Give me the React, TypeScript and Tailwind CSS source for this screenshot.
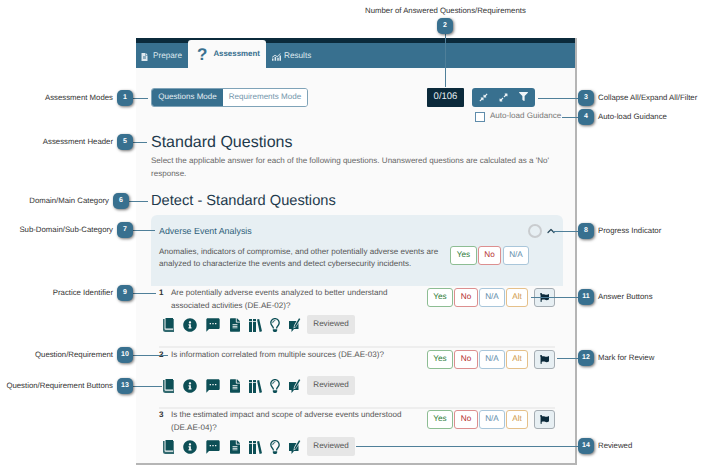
import { FaInfoCircle, FaFileAlt, FaRegLightbulb, FaFlag, FaFilter, FaCompressAlt, FaExpandAlt } from "react-icons/fa";
import { MdSms } from "react-icons/md";
import { ChevronUp } from "lucide-react";

function Bubble({ n, className }: { n: number; className: string }) {
  return (
    <div
      className={`absolute flex h-[16px] w-[16px] items-center justify-center rounded-[5px] bg-[#38708f] text-[7px] font-bold text-white shadow-[1px_1px_3px_rgba(0,0,0,0.55)] ${className}`}
    >
      {n}
    </div>
  );
}

function Label({ children, className }: { children: React.ReactNode; className: string }) {
  return <div className={`absolute whitespace-nowrap text-[7.8px] leading-[10px] text-[#333] ${className}`}>{children}</div>;
}

function Line({ className }: { className: string }) {
  return <div className={`absolute bg-[#4f7f99] ${className}`} />;
}

function Answer({ label, className }: { label: string; className: string }) {
  return (
    <div className={`flex h-[19px] items-center justify-center rounded-[3px] border bg-white text-[8.2px] ${className}`}>
      {label}
    </div>
  );
}

function BookIcon() {
  return (
    <svg viewBox="0 0 11 14" className="h-[14px] w-[11px]" fill="#0d4f56">
      <path d="M2.5 0H10v10.5H2.5z" />
      <path d="M0 1h1.6v9.8q0 1 1 1H10.2V1H11v13H2.5Q0 14 0 12z" opacity="0.85" />
    </svg>
  );
}

function ShelfIcon() {
  return (
    <svg viewBox="0 0 13 14" className="h-[14px] w-[13px]" fill="#0d4f56">
      <path d="M0 1h3v13H0zM4 1h3v13H4z" />
      <path d="M8 1.6l2.2-.6L13 13.2l-2.4.8z" />
      <path d="M0 3h3v.8H0zM4 3h3v.8H4z" fill="#fafafa" />
    </svg>
  );
}

function TaskIcon() {
  return (
    <svg viewBox="0 0 12 14" className="h-[14px] w-[12px]" fill="#0d4f56">
      <path d="M0 3h7.5L5 7.5l-.5 3 2.5-1.6L9.5 5V11H5l-2.5 3v-3H0z" />
      <path d="M5.6 7.8L10 .2l1.3.8-4.4 7.6-1.6 1z" />
    </svg>
  );
}

function IconRow() {
  return (
    <div className="flex items-center">
      <div className="flex w-[143px] items-center justify-between pl-[4px] pr-[1px] text-[#0d4f56]">
        <BookIcon />
        <FaInfoCircle className="h-[14px] w-[14px]" />
        <MdSms className="h-[16px] w-[16px]" />
        <FaFileAlt className="h-[14px] w-[10px]" />
        <ShelfIcon />
        <FaRegLightbulb className="h-[14px] w-[10px]" />
        <TaskIcon />
      </div>
      <div className="ml-[5px] flex h-[19px] w-[48px] items-center justify-center rounded-[2px] bg-[#e6e6e6] text-[8.05px] text-[#555]">
        Reviewed
      </div>
    </div>
  );
}

function Question({ n, lines }: { n: number; lines: string[] }) {
  return (
    <div className="flex items-start">
      <div className="flex-1">
        <div className="-mt-[1px] flex text-[8.05px] leading-[12.5px] text-[#555]">
          <span className="w-[12px] font-bold text-[#333]">{n}</span>
          <div>
            {lines.map((l) => (
              <div key={l}>{l}</div>
            ))}
          </div>
        </div>
      </div>
      <div className="flex items-center">
        <Answer label="Yes" className="w-[26px] border-[#8dbd93] text-[#2f7d3a]" />
        <Answer label="No" className="ml-[1px] w-[24px] border-[#dc8f8f] text-[#b52e2e]" />
        <Answer label="N/A" className="ml-[1px] w-[26px] border-[#a9c6da] text-[#5f8cab]" />
        <Answer label="Alt" className="ml-[1px] w-[22px] border-[#e5c08a] text-[#d09a4a]" />
        <div className="ml-[6px] flex h-[19px] w-[21px] items-center justify-center rounded-[3px] border border-[#a5adb3] bg-[#e7eff3] text-[#0b2a3b]">
          <FaFlag className="mb-[1px] h-[9px] w-[9px]" />
        </div>
      </div>
    </div>
  );
}

export default function App() {
  return (
    <div className="relative h-[469px] w-[706px] overflow-hidden bg-white font-['Liberation_Sans',Arial,sans-serif] [text-rendering:geometricPrecision]">
      <div className="absolute left-[136px] top-[38px] flex h-[427px] w-[441px] flex-col border-r-2 border-b-2 border-[#b5b5b5] bg-[#fafafa]">
        <div className="h-[5px] shrink-0 bg-[#0b2a3b]" />
        <div className="flex h-[25px] shrink-0 bg-[#38708f]">
          <div className="flex w-[52px] items-center pl-[5px] pt-[2px] text-[8.2px] text-[#dfe9ef]">
            <FaFileAlt className="mr-[5px] h-[8px] w-[7px]" />
            Prepare
          </div>
          <div className="-mt-[3px] flex h-[28px] w-[78px] items-center rounded-t-[3px] bg-[#fafafa] pl-[9px] text-[7.9px] font-bold text-[#38708f]">
            <span className="mr-[6px] text-[17px] leading-none">?</span>
            Assessment
          </div>
          <div className="flex items-center pl-[6px] pt-[2px] text-[8.2px] text-[#dfe9ef]">
            <svg viewBox="0 0 12 10" className="mr-[3px] h-[8px] w-[9px]" fill="currentColor">
              <path d="M0 7h2v3H0zM3.5 5h2v5h-2zM7 6h2v4H7zM10 3h2v7h-2zM0 5l4-3 3 2 4-4 .6.6L7 5.4 4 3.4 0.6 6z" />
            </svg>
            Results
          </div>
        </div>

        <div className="flex-1 px-[15px]">
          <div className="flex pt-[20px]">
            <div className="flex h-[19px] overflow-hidden rounded-[3px] border border-[#7fa3b8] text-[8.05px]">
              <div className="flex w-[71px] items-center justify-center bg-[#38708f] text-[#e5eef3]">Questions Mode</div>
              <div className="flex w-[84px] items-center justify-center bg-white text-[#7295ab]">Requirements Mode</div>
            </div>
            <div className="ml-[119px] flex h-[19px] w-[37px] items-center justify-center rounded-[1px] bg-[#0b2a3b] text-[9.5px] text-[#e5eef3]">
              0/106
            </div>
            <div className="ml-[8px] flex h-[19px] w-[63px] items-center justify-around rounded-[3px] bg-[#38708f] px-[2px] text-[#f0f5f8]">
              <FaCompressAlt className="h-[9px] w-[9px]" />
              <FaExpandAlt className="h-[9px] w-[9px]" />
              <FaFilter className="mb-[2px] h-[9px] w-[9px]" />
            </div>
          </div>
          <div className="mt-[2px] flex h-[15px] items-center whitespace-nowrap pl-[324px] text-[8.05px] text-[#777]">
            <div className="mr-[5px] h-[10px] w-[10px] shrink-0 border border-[#5f8cab] bg-white" />
            Auto-load Guidance
          </div>

          <h1 className="mt-[7px] text-[16px] leading-[24px] text-[#1f3a4d]">Standard Questions</h1>
          <p className="w-[405px] text-[8.05px] leading-[12.5px] text-[#666]">
            Select the applicable answer for each of the following questions. Unanswered questions are calculated as a 'No' response.
          </p>

          <h2 className="mt-[12px] text-[14.65px] leading-[18px] text-[#1f3a4d]">Detect - Standard Questions</h2>

          <div className="mt-[5px] h-[71px] w-[412px] rounded-t-[6px] bg-[#e7eff3] pl-[8px] pr-[34px] pt-[9px]">
            <div className="flex items-center justify-between">
              <div className="text-[8.9px] leading-[12px] text-[#2f5f7a]">Adverse Event Analysis</div>
              <div className="-mr-[28px] flex items-center">
                <div className="h-[14px] w-[14px] rounded-full border-2 border-[#c9cccf]" />
                <ChevronUp className="ml-[3px] h-[12px] w-[12px] text-[#2a4a5c]" strokeWidth={2.5} />
              </div>
            </div>
            <div className="mt-[8px] flex items-start justify-between">
              <p className="w-[285px] text-[8.05px] leading-[12.2px] text-[#555]">
                Anomalies, indicators of compromise, and other potentially adverse events are analyzed to characterize the events and detect cybersecurity incidents.
              </p>
              <div className="flex">
                <Answer label="Yes" className="w-[27px] border-[#8dbd93] text-[#2f7d3a]" />
                <Answer label="No" className="ml-[1px] w-[23px] border-[#dc8f8f] text-[#b52e2e]" />
                <Answer label="N/A" className="ml-[2px] w-[26px] border-[#a9c6da] text-[#5f8cab]" />
              </div>
            </div>
          </div>

          <div className="ml-[8px] mt-[2px] w-[396px]">
            <div className="h-[58px]">
              <Question n={1} lines={["Are potentially adverse events analyzed to better understand", "associated activities (DE.AE-02)?"]} />
              <div className="mt-[3px]">
                <IconRow />
              </div>
            </div>
            <div className="h-[61px] border-t-2 border-[#eeeeee] pt-[2px]">
              <Question n={2} lines={["Is information correlated from multiple sources (DE.AE-03)?"]} />
              <div className="mt-[7px]">
                <IconRow />
              </div>
            </div>
            <div className="border-t-2 border-[#eeeeee] pt-[1px]">
              <Question n={3} lines={["Is the estimated impact and scope of adverse events understood", "(DE.AE-04)?"]} />
              <div className="mt-[3px]">
                <IconRow />
              </div>
            </div>
          </div>
        </div>
      </div>

      <Line className="left-[133px] top-[98px] h-px w-[15px]" />
      <Line className="left-[445px] top-[34px] h-[53px] w-px" />
      <Line className="left-[538px] top-[98px] h-px w-[40px]" />
      <Line className="left-[562px] top-[117px] h-px w-[16px]" />
      <Line className="left-[133px] top-[142px] h-px w-[14px]" />
      <Line className="left-[129px] top-[201px] h-px w-[19px]" />
      <Line className="left-[133px] top-[230px] h-px w-[22px]" />
      <Line className="left-[553px] top-[231px] h-px w-[25px]" />
      <Line className="left-[133px] top-[293px] h-px w-[23px]" />
      <Line className="left-[133px] top-[355px] h-px w-[35px]" />
      <Line className="left-[531px] top-[297px] h-px w-[47px]" />
      <Line className="left-[557px] top-[358px] h-px w-[21px]" />
      <Line className="left-[133px] top-[386px] h-px w-[29px]" />
      <Line className="left-[356px] top-[446px] h-px w-[222px]" />

      <Bubble n={1} className="left-[117px] top-[90px]" />
      <Bubble n={2} className="left-[437px] top-[18px]" />
      <Bubble n={3} className="left-[578px] top-[90px]" />
      <Bubble n={4} className="left-[578px] top-[109px]" />
      <Bubble n={5} className="left-[117px] top-[134px]" />
      <Bubble n={6} className="left-[113px] top-[193px]" />
      <Bubble n={7} className="left-[117px] top-[222px]" />
      <Bubble n={8} className="left-[578px] top-[223px]" />
      <Bubble n={9} className="left-[117px] top-[285px]" />
      <Bubble n={10} className="left-[117px] top-[347px]" />
      <Bubble n={11} className="left-[578px] top-[289px]" />
      <Bubble n={12} className="left-[578px] top-[350px]" />
      <Bubble n={13} className="left-[117px] top-[378px]" />
      <Bubble n={14} className="left-[578px] top-[438px]" />

      <Label className="right-[593px] top-[93px]">Assessment Modes</Label>
      <Label className="left-[365px] top-[6px]">Number of Answered Questions/Requirements</Label>
      <Label className="left-[598px] top-[93px]">Collapse All/Expand All/Filter</Label>
      <Label className="left-[598px] top-[112px]">Auto-load Guidance</Label>
      <Label className="right-[593px] top-[137px]">Assessment Header</Label>
      <Label className="right-[597px] top-[196px]">Domain/Main Category</Label>
      <Label className="right-[593px] top-[225px]">Sub-Domain/Sub-Category</Label>
      <Label className="left-[598px] top-[226px]">Progress Indicator</Label>
      <Label className="right-[593px] top-[288px]">Practice Identifier</Label>
      <Label className="right-[593px] top-[350px]">Question/Requirement</Label>
      <Label className="left-[598px] top-[292px]">Answer Buttons</Label>
      <Label className="left-[598px] top-[353px]">Mark for Review</Label>
      <Label className="right-[593px] top-[381px]">Question/Requirement Buttons</Label>
      <Label className="left-[598px] top-[441px]">Reviewed</Label>
    </div>
  );
}
